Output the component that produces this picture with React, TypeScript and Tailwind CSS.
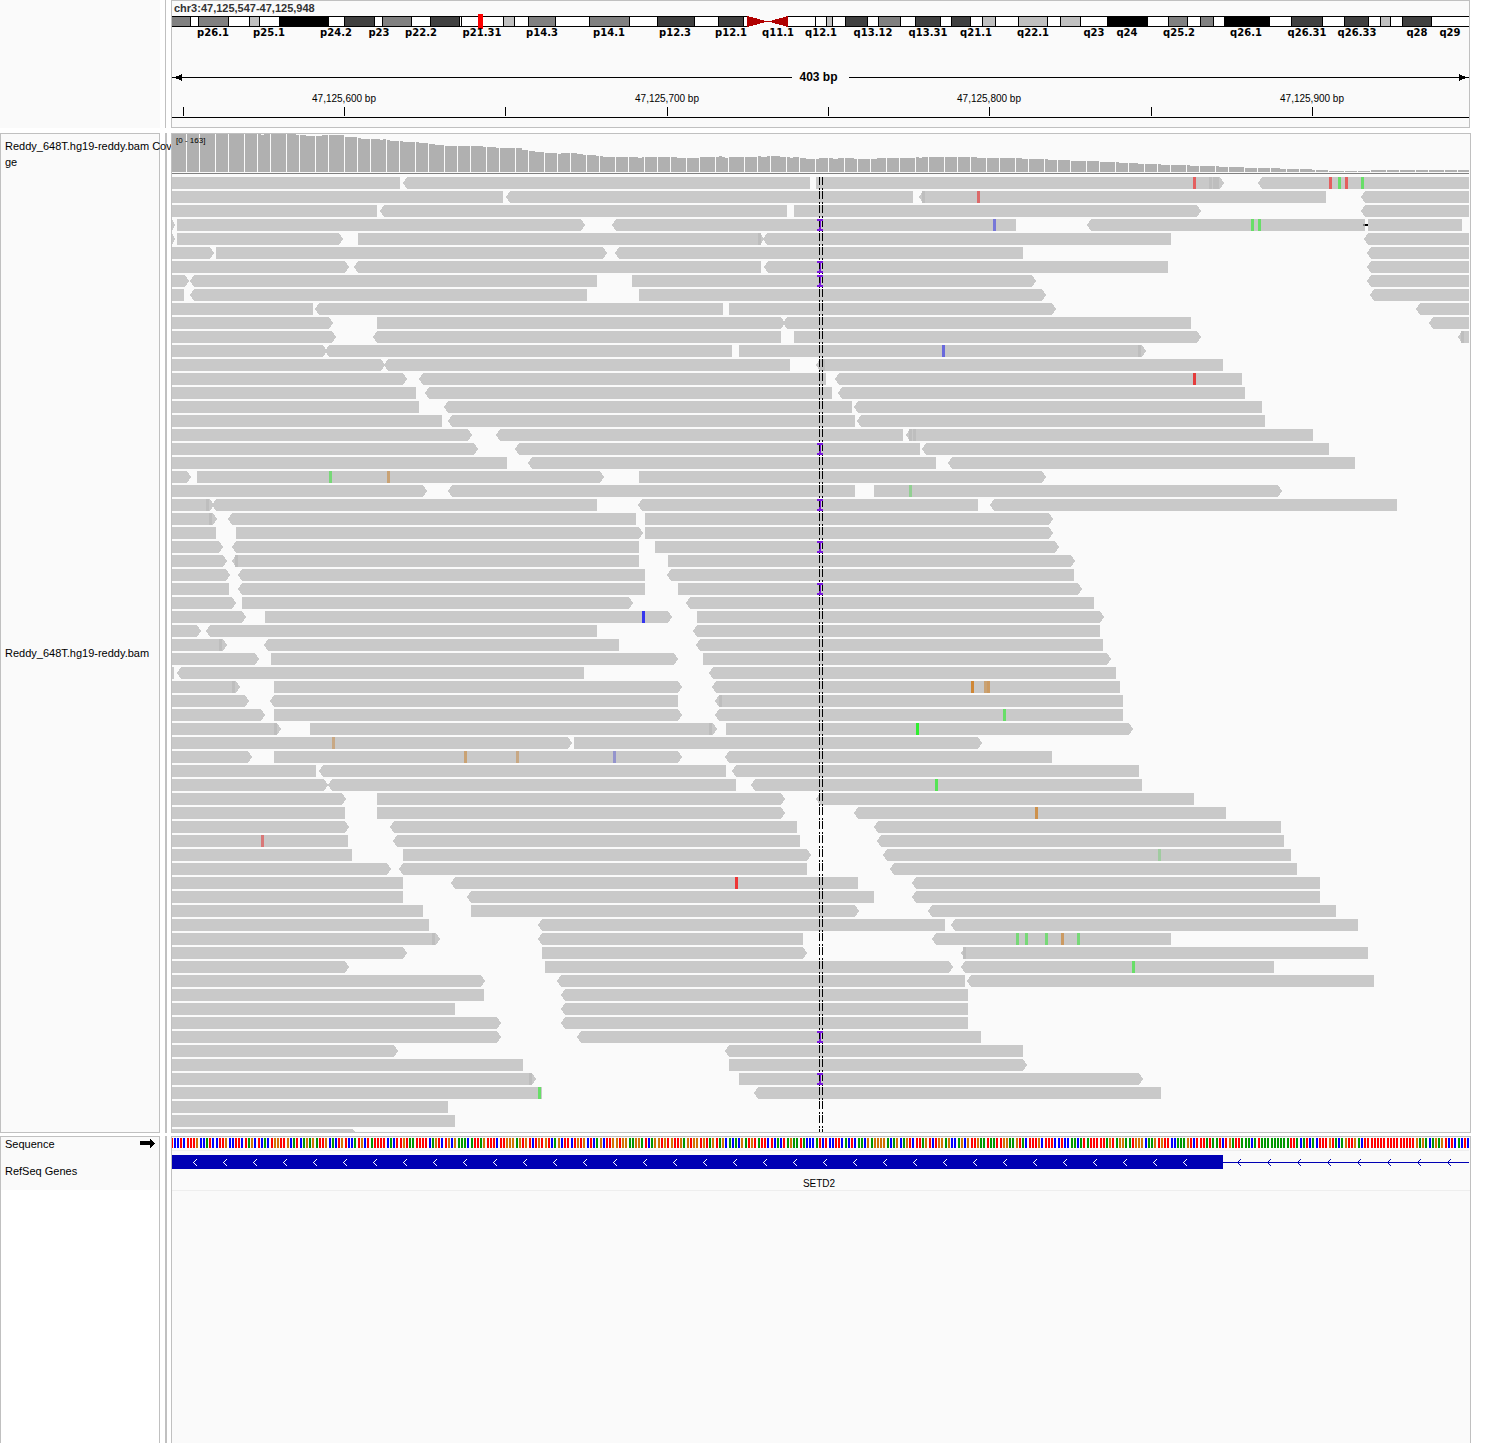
import React from "react";

// Horizontal positions are in track units: the data area spans ORIGIN .. ORIGIN + SPAN.
// The header panel is one unit narrower than the track panels.
const ORIGIN = 172;
const SPAN = 1298;
const HEADER_SPAN = 1297;
const BASES = 403;
const BASE_WIDTH = 1300 / BASES;

const percent = (x: number) => `${((x - ORIGIN) / HEADER_SPAN) * 100}%`;
const baseStart = (i: number) => ORIGIN + Math.floor(i * BASE_WIDTH - 0.97);

type Band = [start: number, end: number, stain: string];

const bands: Band[] = [
  [171, 190, "#808080"], [198, 228, "#808080"], [249, 259, "#c0c0c0"], [279, 328, "#000000"],
  [344, 374, "#404040"], [382, 411, "#808080"], [430, 459, "#404040"], [459, 461, "#ffffff"],
  [503, 514, "#c0c0c0"], [528, 555, "#808080"], [589, 629, "#808080"], [657, 694, "#404040"],
  [718, 743, "#404040"], [815, 826, "#ffffff"], [826, 832, "#c0c0c0"], [845, 867, "#404040"],
  [878, 900, "#808080"], [915, 940, "#404040"], [951, 970, "#404040"], [982, 995, "#c0c0c0"],
  [1018, 1047, "#c0c0c0"], [1060, 1080, "#c0c0c0"], [1107, 1147, "#000000"], [1168, 1187, "#808080"],
  [1200, 1213, "#808080"], [1224, 1269, "#000000"], [1291, 1322, "#404040"], [1344, 1368, "#404040"],
  [1380, 1390, "#c0c0c0"], [1402, 1431, "#404040"],
];

const bandLabels: [string, number][] = [
  ["p26.1", 213], ["p25.1", 269], ["p24.2", 336], ["p23", 379], ["p22.2", 421], ["p21.31", 482],
  ["p14.3", 542], ["p14.1", 609], ["p12.3", 675], ["p12.1", 731], ["q11.1", 778], ["q12.1", 821],
  ["q13.12", 873], ["q13.31", 928], ["q21.1", 976], ["q22.1", 1033], ["q23", 1094], ["q24", 1127],
  ["q25.2", 1179], ["q26.1", 1246], ["q26.31", 1307], ["q26.33", 1357], ["q28", 1417], ["q29", 1450],
];

const ticks = [183, 344, 505, 667, 828, 989, 1151, 1312];
const tickLabels: [string, number][] = [
  ["47,125,600 bp", 344], ["47,125,700 bp", 667], ["47,125,800 bp", 989], ["47,125,900 bp", 1312],
];

// Depth steps: from x onwards the coverage is `depth` pixels high.
const coverage: [x: number, depth: number][] = [
  [172, 38], [261, 37], [264, 38], [296, 37], [306, 36], [322, 37], [345, 35], [357, 34], [361, 33],
  [380, 32], [383, 33], [386, 32], [390, 31], [403, 30], [419, 29], [429, 28], [435, 27], [445, 26],
  [483, 25], [496, 24], [522, 22], [529, 21], [535, 20], [545, 19], [558, 18], [561, 19], [577, 18],
  [583, 17], [596, 16], [603, 15], [638, 14], [642, 15], [677, 14], [699, 15], [719, 16], [722, 15],
  [725, 14], [728, 15], [758, 16], [761, 15], [767, 16], [780, 15], [790, 14], [793, 15], [799, 14],
  [806, 13], [819, 14], [833, 13], [838, 14], [854, 13], [877, 14], [916, 15], [919, 14], [922, 15],
  [977, 14], [1022, 13], [1048, 12], [1071, 11], [1100, 10], [1119, 9], [1138, 8], [1161, 7],
  [1190, 6], [1219, 5], [1245, 4], [1280, 3], [1312, 2], [1329, 1], [1370, 2], [1469, 2],
];

// One line per row; "<" marks a reverse-strand tip and ">" a forward-strand tip.
const readRows = `
172-400 <402-810 816-1225> <1257-1469
172-503 <505-913 <918-1326 <1360-1469
172-377 <379-787 794-1202> <1360-1469
172-176> 177-586> <611-1016 <1086-1365 1368-1462
172-176> 177-344> 358-765> <762-1171 <1363-1469
172-215> 216-608> <614-1023 <1366-1469
172-350> <353-761 <763-1168 <1366-1469
172-190> <189-597 632-1037> <1366-1469
172-184 <189-587 639-1047> <1369-1469
172-313 <314-723 729-1057> <1415-1469
172-334> 377-786> <782-1191 <1428-1469
172-337> <372-781 794-1202> <1457-1469
172-328> <324-732 739-1147>
172-386> <383-790 <815-1223
172-408> <418-826 <834-1242
172-416 <424-832 <837-1245
172-419 <443-852 <853-1262
172-442 <447-855 <856-1265
172-473> <495-903 <905-1313
172-479> <514-920 <921-1329
172-507 <527-936 <947-1355
172-192> 197-605> 639-1047>
172-428> <447-855 874-1283>
172-215> <211-597 <637-978 <989-1397
172-218> <227-636 645-1054>
172-216 236-644> 645-1054>
172-224> <231-639 655-1060>
172-228> <231-639 668-1076>
172-231> <237-645 <666-1074
172-229 <237-645 678-1083>
172-237> 242-634> <685-1094
172-247> 265-673> 697-1105>
172-202> <205-597 <692-1100
172-228> <263-619 <695-1103
172-260> 271-679> 703-1112>
172-174 <176-584 <708-1116
172-241> 274-683> <711-1120
172-250> <269-678 <714-1123
172-266> 274-683> <714-1123
172-282> 310-718> 726-1134>
172-573> 574-983>
172-253> 274-683> <724-1052
172-316 <318-726 <731-1139
172-329> <327-736 <750-1142
172-347> 377-786> <815-1194
172-345 377-786> <853-1226
172-350> <389-797 <873-1281
172-348 <392-800 <876-1284
172-352 403-812> <882-1291
172-392> <398-807 <889-1297
172-403 <450-858 <911-1320
172-403 <466-874 <911-1320
172-423 471-860> <927-1336
172-429 <537-945 <950-1358
172-441> <537-803 <931-1171
172-408> 542-808> <960-1368
172-350> 545-954> <960-1274
172-486> <556-965 <966-1374
172-484 <560-968
172-455 <560-968
172-502> <560-968
172-502> <576-981
172-399> <724-1023
172-523 729-1028>
172-537> 739-1144>
172-542 <753-1161
172-448
172-455
172-358>
`.trim().split("\n").map((line) => line.split(" "));

const SOFT = "#bebebe";
const mismatches: [row: number, x: number, color: string, width?: number][] = [
  [0, 1193, "#e45f5f"], [0, 1209, SOFT], [0, 1213, SOFT, 6], [0, 1329, "#e45f5f"], [0, 1338, "#68de68"],
  [0, 1345, "#e45f5f"], [0, 1361, "#68de68"], [1, 922, SOFT], [1, 977, "#dc6a6a"], [3, 993, "#7777d8"],
  [3, 1251, "#68de68"], [3, 1258, "#68de68"], [4, 758, SOFT], [11, 1461, SOFT], [12, 942, "#6969dc"],
  [12, 1138, SOFT], [13, 819, SOFT, 6], [14, 1193, "#e43c3c"], [18, 909, SOFT], [18, 913, SOFT],
  [21, 329, "#77d877"], [21, 387, "#c9a274"], [22, 909, "#92cf92"], [23, 206, SOFT], [24, 209, SOFT],
  [27, 235, SOFT], [31, 642, "#3535ee"], [33, 219, SOFT], [36, 232, SOFT], [36, 971, "#cf8736"],
  [36, 984, "#c9a274"], [36, 987, "#cb9a62"], [37, 719, SOFT], [38, 1003, "#68de68"], [39, 274, SOFT],
  [39, 709, SOFT], [39, 916, "#30ee30"], [40, 332, "#c8a884"], [41, 464, "#c9a274"], [41, 516, "#c8a884"],
  [41, 613, "#9494cc"], [43, 935, "#55e355"], [45, 1035, "#cd914c"], [47, 261, "#d87777"],
  [48, 1158, "#a0cba0"], [50, 735, "#ee3535"], [54, 432, SOFT], [54, 1016, "#77d877"], [54, 1025, "#77d877"],
  [54, 1045, "#77d877"], [54, 1061, "#cb9a62"], [54, 1077, "#77d877"], [55, 963, SOFT], [56, 1132, "#68de68"],
  [64, 529, SOFT], [65, 538, "#68de68"],
];

const insertionRows = [3, 6, 7, 19, 23, 26, 29, 61, 64];

const sequence =
  "TCCTC TTTG CCATC CTTG CCTTC TAGC TCAC TGGTT GCAT CAGAG ATTG CACTG TCCA TGCT ATTTT CACT TGTAA TTTT CAGT CTGCG AAAC ATTAG TTTC " +
  "TTGGG AGTG TCTG TGTCA GCTT CTGTG CTCA GCTT GGTGG AAGG ATCAG GTGT GTTGA GTGG TGTA GTAG CACAC GATGT ATTC TCAC TAGAA TACC CATCT CCTT CACTC AACG AGGG GACAG CAGT CTTAG TCTG GAGC CAGCG TTGA AT " +
  "AAT TGGA AGTAC TTTG CTTT CCTCC AACA TATTT TTAG TAGG AATGG GCAA GTGTT CCAA AGTCT TTAT AATC TGATT AAAC ATAAA AAAA AATT ACATC ACTT TGTAC AGTT GACTT TTTT TTTT TTTTT TGAG ACAGA GTCT CACT C";

const baseColor: Record<string, string> = { A: "#009600", C: "#0000ff", G: "#d17105", T: "#ff0000" };

type PlotProps = { height: number; span?: number; className: string; label: string; children: React.ReactNode };

function Plot({ height, span = SPAN, className, label, children }: PlotProps) {
  return (
    <svg
      viewBox={`${ORIGIN} 0 ${span} ${height}`}
      preserveAspectRatio="none"
      shapeRendering="crispEdges"
      role="img"
      aria-label={label}
      className={className}
    >
      {children}
    </svg>
  );
}

function Ideogram() {
  return (
    <Plot height={15} span={HEADER_SPAN} className="block h-[15px] w-full" label="Chromosome 3 ideogram">
      <rect x={172} y={2} width={1297} height={11} fill="#000" />
      <rect x={172} y={3} width={1297} height={9} fill="#fff" />
      {bands.map(([start, end, stain]) => (
        <g key={start}>
          <rect x={start} y={2} width={end - start + 1} height={11} fill="#000" />
          <rect x={start + 1} y={3} width={end - start - 1} height={9} fill={stain} />
        </g>
      ))}
      <rect x={747} y={2} width={41} height={11} fill="#fafafa" />
      <path d="M747 2L768 7.5L747 13ZM788 2L768 7.5L788 13Z" fill="#b00000" />
      <rect x={478} y={0} width={5} height={15} fill="#f00" />
    </Plot>
  );
}

function Ruler() {
  return (
    <>
      <div className="mt-8 flex h-4 items-center">
        <div className="flex flex-1 items-center">
          <svg viewBox="0 0 10 7" className="h-[7px] w-[10px] shrink-0" shapeRendering="crispEdges" aria-hidden="true">
            <path d="M2 3.5L10 0V7Z" />
            <path d="M0 3H10V4H0Z" />
          </svg>
          <div className="h-px flex-1 bg-black" />
        </div>
        <div className="w-[57px] pr-1 text-center text-[12px] leading-4 font-bold">403 bp</div>
        <div className="flex flex-1 items-center">
          <div className="h-px flex-1 bg-black" />
          <svg viewBox="0 0 10 7" className="h-[7px] w-[10px] shrink-0" shapeRendering="crispEdges" aria-hidden="true">
            <path d="M8 3.5L0 0V7Z" />
            <path d="M0 3H10V4H0Z" />
          </svg>
        </div>
      </div>
      <div className="relative mt-2 h-3 text-[10px] leading-3">
        {tickLabels.map(([text, x]) => (
          <span key={text} className="absolute -translate-x-1/2 whitespace-nowrap" style={{ left: percent(x) }}>
            {text}
          </span>
        ))}
      </div>
      <Plot height={13} span={HEADER_SPAN} className="block h-[13px] w-full" label="Position ruler">
        {ticks.map((x) => (
          <rect key={x} x={x} y={2} width={1} height={9} />
        ))}
        <rect x={172} y={12} width={1297} height={1} />
      </Plot>
    </>
  );
}

function CoverageTrack() {
  const top = 38;
  const outline = coverage
    .map(([x, depth], i) => `${i === 0 ? `M${x} ${top}` : `H${x}`}V${top - depth}`)
    .join("");
  const gaps: number[] = [];
  for (let i = 1; i <= BASES; i++) {
    if (baseStart(i) - baseStart(i - 1) === 4) gaps.push(baseStart(i) - 1);
  }
  return (
    <div className="relative">
      <Plot height={40} className="block h-10 w-full" label="Read coverage">
        <path d={`${outline}V${top}Z`} fill="#b0b0b0" />
        {gaps.map((x) => (
          <rect key={x} x={x} y={0} width={1} height={38} fill="#fafafa" />
        ))}
        <rect x={172} y={39} width={1297} height={1} fill="#808080" />
      </Plot>
      <span className="absolute top-[2px] left-1 text-[8px] leading-[10px]">[0 - 163]</span>
    </div>
  );
}

function readPath(code: string, y: number) {
  const reverse = code.startsWith("<");
  const forward = code.endsWith(">");
  const [a, b] = code.replace("<", "").replace(">", "").split("-").map(Number);
  const left = reverse ? a + 5 : a;
  const right = forward ? Math.max(b - 5, a) : b;
  const tail = forward ? `L${b - 1} ${y + 6}L${right} ${y + 12}` : `V${y + 12}`;
  const head = reverse ? `L${a + 1} ${y + 6}` : "";
  return `M${left} ${y}H${right}${tail}H${left}${head}Z`;
}

function AlignmentTrack() {
  const rowY = (row: number) => 3 + row * 14;
  return (
    <Plot height={958} className="block h-[958px] w-full" label="Aligned reads">
      {readRows.map((reads, row) => (
        <path key={row} d={reads.map((code) => readPath(code, rowY(row))).join("")} fill="#c9c9c9" />
      ))}
      {mismatches.map(([row, x, color, width = 3]) => (
        <rect key={`${row}-${x}`} x={x} y={rowY(row)} width={width} height={12} fill={color} />
      ))}
      <rect x={1363} y={rowY(3) + 5} width={2} height={2} fill="#808080" />
      <rect x={1365} y={rowY(3) + 5} width={3} height={2} fill="#000" />
      <path d="M819.5 3V958M822.5 3V958" stroke="#000" strokeWidth={1} strokeDasharray="8 3 2 1" fill="none" />
      {insertionRows.map((row) => (
        <g key={row}>
          <path d={`M817 ${rowY(row)}h6v2h-2v8h2v2h-6v-2h2v-8h-2Z`} fill="#7a17dc" />
          <path d={`M819 ${rowY(row) + 2}h1v6h-1ZM822 ${rowY(row) + 2}h1v6h-1Z`} fill="#000" />
        </g>
      ))}
    </Plot>
  );
}

function SequenceTrack() {
  return (
    <Plot height={14} className="block h-[14px] w-full" label="Reference sequence">
      {[...sequence.replace(/ /g, "")].map((base, i) => (
        <rect
          key={i}
          x={baseStart(i)}
          y={1}
          width={baseStart(i) > 1467 ? 1 : 2}
          height={10}
          fill={baseColor[base]}
        />
      ))}
      <rect x={172} y={13} width={1297} height={1} fill="#eeeeee" />
    </Plot>
  );
}

function GeneTrack() {
  const exonArrows = Array.from({ length: 34 }, (_, i) => 194 + i * 30);
  const intronArrows = Array.from({ length: 8 }, (_, i) => 1238 + i * 30);
  const chevron = (x: number) => `M${x + 2} 8h1v1h-1v1h-1v1h-1v1h1v1h1v1h1v1h-1v-1h-1v-1h-1v-1h-1v-1h1v-1h1v-1h1Z`;
  return (
    <div className="border-b border-[#eeeeee]">
      <Plot height={23} className="block h-[23px] w-full" label="SETD2 gene model">
        <rect x={172} y={4} width={1051} height={14} fill="#0000b4" />
        <rect x={1223} y={11} width={246} height={1} fill="#0000b4" />
        <path d={exonArrows.map(chevron).join("")} fill="#fff" />
        <path d={intronArrows.map(chevron).join("")} fill="#0000b4" />
      </Plot>
      <div className="h-4 pr-1 text-center text-[10px] leading-[19px]">SETD2</div>
    </div>
  );
}

const rowGrid = "grid grid-cols-[160px_11px_minmax(0,1fr)]";

export default function App() {
  return (
    <main className="flex min-h-screen flex-col gap-[3px] overflow-hidden bg-white pr-[18px] font-['Liberation_Sans',Arial,sans-serif] text-[11px] text-black">
      <header className={`${rowGrid} mb-[2px]`}>
        <div className="bg-[#fafafa]" />
        <div className="ml-[5px] w-px bg-[#c0c0c0]" />
        <div className="mr-px h-32 border border-[#c0c0c0] bg-[#fafafa]">
          <h1 className="h-[13px] pl-[2px] text-[11px] leading-[14px] font-bold whitespace-nowrap text-[#333333]">
            chr3:47,125,547-47,125,948
          </h1>
          <Ideogram />
          <div className="relative h-2 font-['DejaVu_Sans',sans-serif] text-[10px] leading-2 font-bold">
            {bandLabels.map(([name, x]) => (
              <span key={name} className="absolute -translate-x-1/2" style={{ left: percent(x) }}>
                {name}
              </span>
            ))}
          </div>
          <Ruler />
        </div>
      </header>

      <section className={rowGrid}>
        <div className="relative z-10 flex flex-col border border-[#c0c0c0] bg-[#fafafa] pl-1">
          <div className="h-10 pt-1 leading-4 whitespace-nowrap">
            Reddy_648T.hg19-reddy.bam Cove
            <br />
            ge
          </div>
          <div className="flex flex-1 items-center">Reddy_648T.hg19-reddy.bam</div>
        </div>
        <div className="ml-[5px] w-[2px] bg-[#c0c0c0]" />
        <div className="relative z-20 border border-[#c0c0c0] bg-[#fafafa]">
          <CoverageTrack />
          <AlignmentTrack />
        </div>
      </section>

      <section className={`${rowGrid} flex-1`}>
        <div className="border border-b-0 border-[#c0c0c0] bg-white">
          <div className="h-[53px] bg-[#fafafa] pr-1 pl-1">
            <div className="flex h-[14px] items-center justify-between">
              <span className="leading-4">Sequence</span>
              <svg
                viewBox="0 0 15 9"
                className="mt-[2px] h-[9px] w-[15px] self-start"
                shapeRendering="crispEdges"
                role="img"
                aria-label="Forward strand"
              >
                <path d="M0 2H10V0H11L15 4.5L11 9H10V6H0Z" />
              </svg>
            </div>
            <div className="mt-3 leading-4">RefSeq Genes</div>
          </div>
        </div>
        <div className="ml-[5px] w-[2px] bg-[#c0c0c0]" />
        <div className="border border-b-0 border-[#c0c0c0] bg-[#fafafa]">
          <SequenceTrack />
          <GeneTrack />
        </div>
      </section>
    </main>
  );
}
